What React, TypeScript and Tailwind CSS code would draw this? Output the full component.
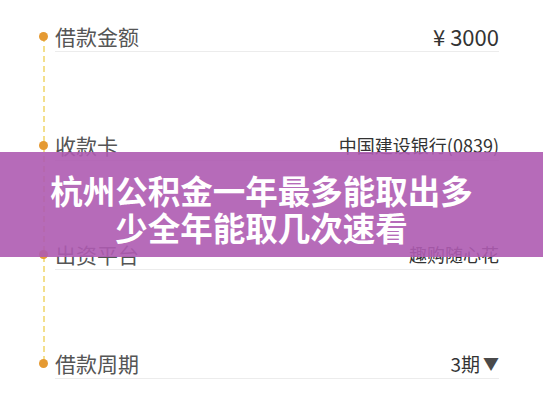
import React from 'react';

type Row = {
    label: string;
    value: React.ReactNode;
    valueClass: string;
};

const ROWS: Row[] = [
    { label: '借款金额', value: '¥ 3000', valueClass: 'text-[22px] text-[#333]' },
    { label: '收款卡', value: '中国建设银行(0839)', valueClass: 'text-[18px] text-[#333]' },
    { label: '出资平台', value: '趣购随心花', valueClass: 'text-[18px] text-[#333]' },
    {
        label: '借款周期',
        value: (
            <span className="flex items-center gap-[3px]">
                3期<span className="text-[16px] text-[#4a4a4a]">▼</span>
            </span>
        ),
        valueClass: 'text-[19px] text-[#333]',
    },
];

export default function App() {
    return (
        <div
            className="relative w-[543px] h-[408px] overflow-hidden bg-white"
            style={{ fontFamily: '"Noto Sans CJK SC", "Noto Sans", sans-serif' }}
        >
            {/* timeline rail */}
            <div className="absolute left-[43px] top-[36px] h-[326px] border-l-2 border-dashed border-[#f3df8c]" />

            <div className="flex flex-col pt-[25px] pl-[55px] pr-[44px]">
                {ROWS.map((row) => (
                    <div key={row.label} className="relative h-[109px]">
                        <span className="absolute left-[-16px] top-[7px] w-[9px] h-[9px] rounded-full bg-[#e59a33]" />
                        <div className="flex items-center justify-between h-[22px]">
                            <span className="text-[21px] leading-none text-[#555]">{row.label}</span>
                            <span className={`leading-none ${row.valueClass}`}>{row.value}</span>
                        </div>
                        <div className="mt-[4px] border-b border-[#ececec]" />
                    </div>
                ))}
            </div>

            {/* title banner */}
            <div className="absolute left-0 right-0 top-[152px] h-[105px] bg-[#ae5bb1]/90 flex items-center justify-center pl-[38px] pr-[58px]">
                <h1 className="text-center text-white font-bold text-[32.5px] leading-[37px] pt-[6px]">
                    杭州公积金一年最多能取出多少全年能取几次速看
                </h1>
            </div>
        </div>
    );
}
